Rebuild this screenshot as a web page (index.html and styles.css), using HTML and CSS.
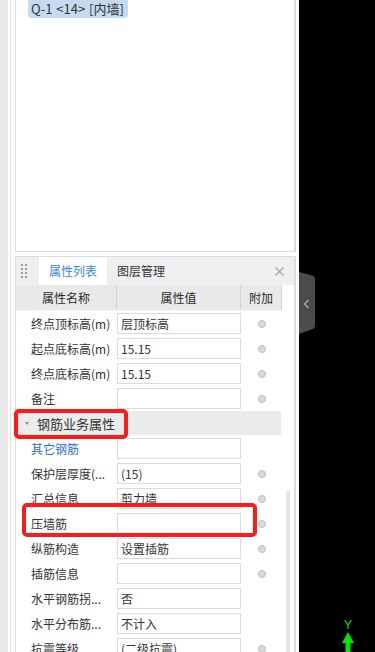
FILE: index.html
```html
<!DOCTYPE html>
<html lang="zh-CN">

<head>
  <meta charset="UTF-8">
  <title>属性列表</title>
  <link rel="stylesheet" href="styles.css">
</head>

<body>
  <div class="app">
    <aside class="sidebar">
      <div class="rail"></div>
      <div class="gutter"></div>

      <div class="panels">
        <div class="panel-top">
          <span class="chip">Q-1 &lt;14&gt; [内墙]</span>
        </div>

        <div class="panel-props">
          <div class="tabbar">
            <span class="grip"></span>
            <span class="tab active">属性列表</span>
            <span class="tab">图层管理</span>
            <svg class="close" width="9" height="9" viewBox="0 0 9 9">
              <path d="M0.5 0.5 L8.5 8.5 M8.5 0.5 L0.5 8.5" stroke="#a0a0a0" stroke-width="1.1" fill="none" />
            </svg>
          </div>

          <div class="grid-head">
            <span>属性名称</span>
            <span>属性值</span>
            <span>附加</span>
          </div>

          <div class="row">
            <span class="name">终点顶标高(m)</span>
            <span class="value">层顶标高</span>
            <span class="extra"><i class="radio"></i></span>
          </div>
          <div class="row">
            <span class="name">起点底标高(m)</span>
            <span class="value">15.15</span>
            <span class="extra"><i class="radio"></i></span>
          </div>
          <div class="row">
            <span class="name">终点底标高(m)</span>
            <span class="value">15.15</span>
            <span class="extra"><i class="radio"></i></span>
          </div>
          <div class="row">
            <span class="name">备注</span>
            <span class="value"></span>
            <span class="extra"><i class="radio"></i></span>
          </div>

          <div class="section">
            <span class="caret"></span>
            <span>钢筋业务属性</span>
          </div>

          <div class="row">
            <span class="name link">其它钢筋</span>
            <span class="value"></span>
            <span class="extra"></span>
          </div>
          <div class="row">
            <span class="name">保护层厚度(...</span>
            <span class="value">(15)</span>
            <span class="extra"><i class="radio"></i></span>
          </div>
          <div class="row">
            <span class="name">汇总信息</span>
            <span class="value">剪力墙</span>
            <span class="extra"><i class="radio"></i></span>
          </div>
          <div class="row">
            <span class="name">压墙筋</span>
            <span class="value"></span>
            <span class="extra"><i class="radio"></i></span>
          </div>
          <div class="row">
            <span class="name">纵筋构造</span>
            <span class="value">设置插筋</span>
            <span class="extra"><i class="radio"></i></span>
          </div>
          <div class="row">
            <span class="name">插筋信息</span>
            <span class="value"></span>
            <span class="extra"><i class="radio"></i></span>
          </div>
          <div class="row">
            <span class="name">水平钢筋拐...</span>
            <span class="value">否</span>
            <span class="extra"></span>
          </div>
          <div class="row">
            <span class="name">水平分布筋...</span>
            <span class="value">不计入</span>
            <span class="extra"></span>
          </div>
          <div class="row">
            <span class="name">抗震等级</span>
            <span class="value">(二级抗震)</span>
            <span class="extra"><i class="radio"></i></span>
          </div>

          <div class="scrollbar"></div>
        </div>
      </div>

      <!-- marcas rojas de anotación -->
      <div class="mark mark-section"></div>
      <div class="mark mark-row"></div>
    </aside>

    <main class="viewport">
      <svg class="handle" width="17" height="63" viewBox="0 0 17 63">
        <path d="M0 0 L13 3.6 Q16 4.5 16 7.5 L16 53.5 Q16 56.5 13 57.3 L0 62 Z" fill="#4b4b4b" />
        <path d="M9.5 28 L5.5 32 L9.5 36" stroke="#b4b4b4" stroke-width="1.1" fill="none" />
      </svg>

      <div class="axis">
        <span class="axis-label">Y</span>
        <svg width="12" height="20" viewBox="0 0 12 20">
          <path d="M6 0 L12 11 L0 11 Z" fill="#00e600" />
          <rect x="3.5" y="10" width="5" height="10" fill="#00e600" />
        </svg>
      </div>
    </main>
  </div>
</body>

</html>
```

FILE: styles.css
```css
html,
body {
  margin: 0;
  height: 652px;
  overflow: hidden;
  background: #000;
  font-family: "Noto Sans CJK SC", "Noto Sans", sans-serif;
  font-size: 12px;
  color: #333;
}

.app {
  display: flex;
  height: 652px;
}

.sidebar {
  position: relative;
  display: flex;
  width: 299px;
  flex-shrink: 0;
  background: #fff;
}

.rail {
  width: 8px;
  background: #e9e9e9;
}

.gutter {
  width: 7px;
  box-sizing: border-box;
  border-left: 2px solid #fff;
  background: linear-gradient(90deg, #e2e2e2 1px, transparent 1px);
}

.panels {
  width: 281px;
  display: flex;
  flex-direction: column;
}

.panel-top {
  height: 251px;
  border: 1px solid #dcdcdc;
  border-top: none;
  border-right-width: 2px;
  padding-left: 12px;
}

.chip {
  display: inline-block;
  height: 18px;
  line-height: 17px;
  padding: 0 4px 0 3px;
  background: #c6daf2;
  border-radius: 0 0 4px 4px;
  font-size: 13px;
  color: #333;
  word-spacing: 1px;
  white-space: pre;
}

.panel-props {
  position: relative;
  margin-top: 4px;
  flex: 1;
  border: 1px solid #dcdcdc;
  border-bottom: none;
  border-right-width: 2px;
  overflow: hidden;
}

.tabbar {
  display: flex;
  align-items: center;
  height: 28px;
  background: #efeff1;
}

.grip {
  width: 8px;
  height: 16px;
  margin: 0 11px 0 4px;
  background-image: radial-gradient(circle, #9c9c9c 1px, transparent 1.3px);
  background-size: 4px 4px;
}

.tab {
  height: 28px;
  line-height: 28px;
  padding: 0 10px;
  color: #333;
}

.tab.active {
  background: #fff;
  color: #3a87e6;
}

.close {
  margin-left: auto;
  margin-right: 10px;
}

.grid-head,
.row {
  display: grid;
  grid-template-columns: 101px 124px 41px;
  width: 266px;
}

.grid-head {
  height: 25px;
  background: #e9e9e9;
  border-bottom: 1px solid #f4f4f4;
}

.grid-head span {
  line-height: 25px;
  text-align: center;
  color: #2b2b2b;
  border-right: 1px solid #d4d4d4;
}

.row {
  height: 25px;
  align-items: center;
}

.name {
  padding-left: 15px;
  white-space: nowrap;
  overflow: hidden;
  line-height: 25px;
}

.name.link {
  color: #1f6fd6;
}

.value {
  box-sizing: border-box;
  height: 21px;
  line-height: 19px;
  border: 1px solid #dcdcdc;
  padding-left: 3px;
  white-space: nowrap;
}

.extra {
  display: flex;
  justify-content: center;
  align-items: center;
}

.radio {
  box-sizing: border-box;
  width: 8px;
  height: 8px;
  border-radius: 50%;
  background: #dadada;
  border: 1px solid #bdbdbd;
}

.section {
  display: flex;
  align-items: center;
  width: 265px;
  height: 24px;
  margin-bottom: 1px;
  background: #ebebeb;
  font-size: 13px;
}

.caret {
  width: 0;
  height: 0;
  margin: 0 8px 0 9px;
  border-left: 2.5px solid transparent;
  border-right: 2.5px solid transparent;
  border-top: 3px solid #8a8a8a;
}

.scrollbar {
  position: absolute;
  left: 270px;
  top: 233px;
  width: 4px;
  height: 200px;
  border-radius: 2px;
  background: #e6e6e6;
}

.mark {
  position: absolute;
  box-sizing: border-box;
  border: 4px solid #ff1a1a;
  border-radius: 5px;
}

.mark-section {
  left: 14px;
  top: 409px;
  width: 114px;
  height: 30px;
}

.mark-row {
  left: 22px;
  top: 503px;
  width: 235px;
  height: 34px;
}

.viewport {
  position: relative;
  flex: 1;
  background: #000;
}

.handle {
  position: absolute;
  left: 0;
  top: 272px;
}

.axis {
  position: absolute;
  left: 43px;
  top: 619px;
  display: flex;
  flex-direction: column;
  align-items: center;
  width: 12px;
}

.axis-label {
  font-family: "Liberation Sans", sans-serif;
  font-size: 12px;
  line-height: 13px;
  color: #00e600;
}
```
